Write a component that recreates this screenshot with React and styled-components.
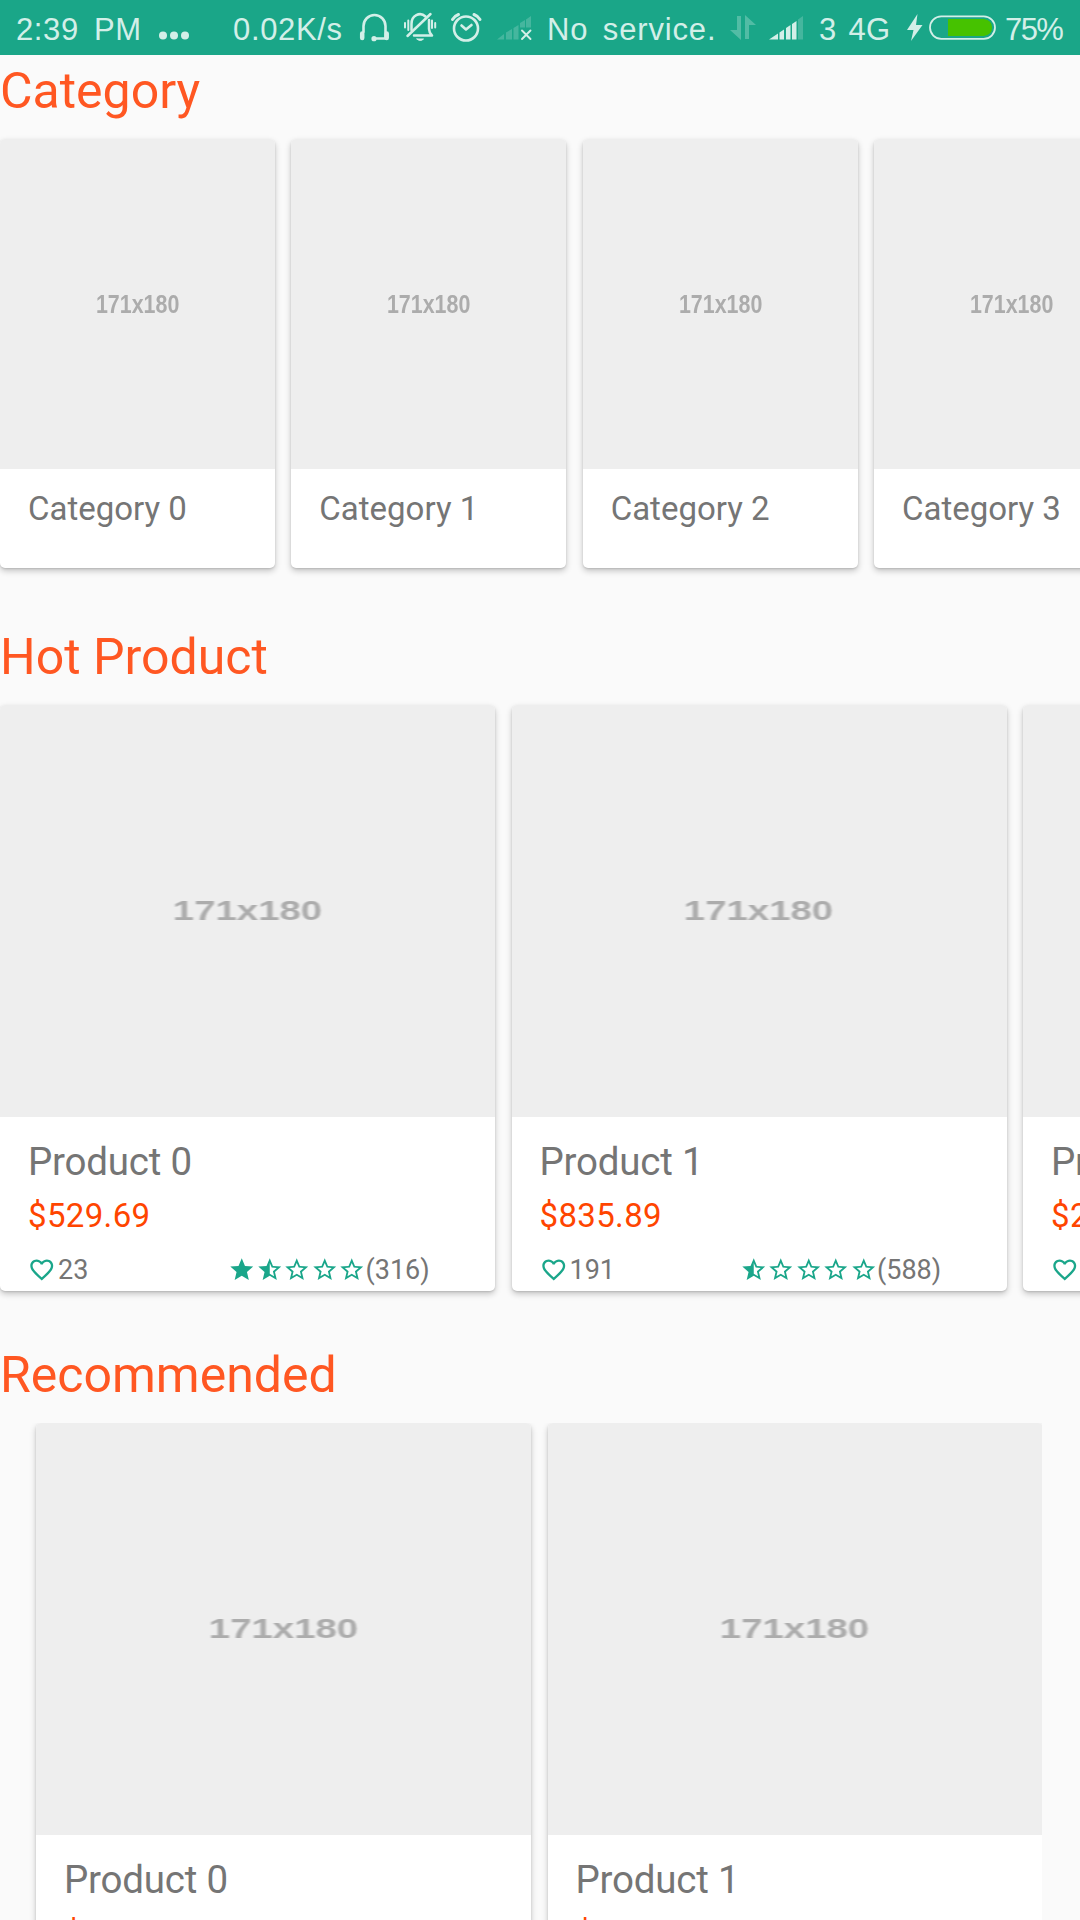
import React from 'react';
import styled, { createGlobalStyle } from 'styled-components';

const Global = createGlobalStyle`
  html, body { margin: 0; padding: 0; }
  body { background: #fafafa; font-family: Roboto, sans-serif; }
`;

const Screen = styled.div`
  width: 1080px;
  height: 1920px;
  overflow: hidden;
  background: #fafafa;
  display: flex;
  flex-direction: column;
`;

const StatusBar = styled.header`
  flex: none;
  height: 55px;
  box-sizing: border-box;
  padding: 0 16px;
  background: #1aa688;
  color: #d3efe8;
  display: flex;
  align-items: center;
  font: 31px/55px 'Liberation Sans', sans-serif;
  white-space: pre;
`;

const StatusText = styled.span`
  flex: none;
  box-sizing: border-box;
  width: ${(p) => p.$w}px;
  height: 55px;
  padding-top: 2px;
  letter-spacing: ${(p) => p.$ls || 0}px;
  word-spacing: ${(p) => p.$ws || 0}px;
`;

const StatusIcon = styled.svg`
  flex: none;
  display: block;
  width: ${(p) => p.$w}px;
  height: 55px;
`;

const Section = styled.section`
  flex: none;
  height: ${(p) => p.$h}px;
`;

const Title = styled.h2`
  margin: 0;
  height: ${(p) => p.$h}px;
  box-sizing: border-box;
  padding-top: ${(p) => p.$top}px;
  font-weight: 400;
  font-size: 50px;
  line-height: 60px;
  color: #ff5722;
`;

const Row = styled.div`
  display: flex;
  gap: ${(p) => p.$gap || 16.5}px;
`;

const ClippedRow = styled(Row)`
  width: 1042px;
  box-sizing: border-box;
  padding-left: 36px;
  overflow: hidden;
`;

const Card = styled.article`
  flex: none;
  width: ${(p) => p.$w}px;
  height: ${(p) => p.$h}px;
  border-radius: 5px;
  background: #fff;
  box-shadow: 0 3px 6px rgba(0, 0, 0, 0.22), 0 1px 2px rgba(0, 0, 0, 0.12);
`;

const Placeholder = styled.div`
  height: ${(p) => p.$h}px;
  border-radius: 5px 5px 0 0;
  background: #eeeeee;
  color: #acacac;
  display: flex;
  align-items: center;
  justify-content: center;
  font: 700 ${(p) => p.$size}px/30px 'Liberation Sans', sans-serif;
`;

const Dimensions = styled.span`
  transform: scaleX(${(p) => p.$stretch});
  filter: blur(0.7px);
`;

const Caption = styled.div`
  padding: 20px 28px 0;
  font-size: 33px;
  line-height: 40px;
  color: #757575;
`;

const Info = styled.div`
  padding: 22px 28px 0;
  color: #757575;
`;

const Name = styled.div`
  font-size: 38.5px;
  letter-spacing: -0.2px;
  line-height: 46px;
`;

const Price = styled.div`
  margin-top: 11px;
  font-size: 33px;
  letter-spacing: 0.35px;
  line-height: 39px;
  color: #ff4500;
`;

const Meta = styled.div`
  display: flex;
  align-items: center;
  margin-top: 17px;
  height: 36px;
  font-size: 27px;
  line-height: 32px;
`;

const Likes = styled.div`
  width: 200px;
  display: flex;
  align-items: center;
`;

const Glyph = styled.svg`
  flex: none;
  display: block;
  width: 27.5px;
  height: 27.5px;
  margin-right: ${(p) => p.$gap || 0}px;
  margin-top: -1px;
  fill: #1aa68a;
`;

const Stars = styled.div`
  display: flex;
  align-items: center;
`;

const HEART = 'M16.5 3c-1.74 0-3.41.81-4.5 2.09C10.91 3.81 9.24 3 7.5 3 4.42 3 2 5.42 2 8.5c0 3.78 3.4 6.86 8.55 11.54L12 21.35l1.45-1.32C18.6 15.36 22 12.28 22 8.5 22 5.42 19.58 3 16.5 3zm-4.4 15.55l-.1.1-.1-.1C7.14 14.24 4 11.39 4 8.5 4 6.5 5.5 5 7.5 5c1.54 0 3.04.99 3.57 2.36h1.87C13.46 5.99 14.96 5 16.5 5c2 0 3.5 1.5 3.5 3.5 0 2.89-3.14 5.74-7.9 10.05z';
const STAR = {
  full: 'M12 17.27L18.18 21l-1.64-7.03L22 9.24l-7.19-.61L12 2 9.19 8.63 2 9.24l5.46 4.73L5.82 21z',
  half: 'M22 9.24l-7.19-.62L12 2 9.19 8.63 2 9.24l5.46 4.73L5.82 21 12 17.27 18.18 21l-1.63-7.03L22 9.24zM12 15.4V6.1l1.71 4.04 4.38.38-3.32 2.88 1 4.28L12 15.4z',
  empty: 'M22 9.24l-7.19-.62L12 2 9.19 8.63 2 9.24l5.46 4.73L5.82 21 12 17.27 18.18 21l-1.63-7.03L22 9.24zM12 15.4l-3.76 2.27 1-4.28-3.32-2.88 4.38-.38L12 6.1l1.71 4.04 4.38.38-3.32 2.88 1 4.28L12 15.4z',
};

const products = [
  { name: 'Product 0', price: '$529.69', likes: 23, rating: 1.5, reviews: 316 },
  { name: 'Product 1', price: '$835.89', likes: 191, rating: 0.5, reviews: 588 },
  { name: 'Product 2', price: '$274.35', likes: 87, rating: 2.5, reviews: 402 },
];

function Rating({ value, reviews }) {
  return (
    <Stars>
      {[0, 1, 2, 3, 4].map((i) => (
        <Glyph key={i} viewBox="0 0 24 24">
          <path d={value - i >= 1 ? STAR.full : value - i > 0 ? STAR.half : STAR.empty} />
        </Glyph>
      ))}
      <span>({reviews})</span>
    </Stars>
  );
}

function ProductCard({ product }) {
  return (
    <Card $w={495} $h={586}>
      <Placeholder $h={412} $size={28}><Dimensions $stretch={1.37}>171x180</Dimensions></Placeholder>
      <Info>
        <Name>{product.name}</Name>
        <Price>{product.price}</Price>
        <Meta>
          <Likes>
            <Glyph viewBox="0 0 24 24" $gap={2.5}><path d={HEART} /></Glyph>
            {product.likes}
          </Likes>
          <Rating value={product.rating} reviews={product.reviews} />
        </Meta>
      </Info>
    </Card>
  );
}

function Status() {
  const ink = '#d3efe8';
  return (
    <StatusBar>
      <StatusText $w={143} $ls={0.6} $ws={6}>2:39 PM</StatusText>
      <StatusIcon $w={74} viewBox="159 0 74 55" fill={ink}>
        <circle cx="163" cy="35.5" r="4" /><circle cx="174" cy="35.5" r="4" /><circle cx="185" cy="35.5" r="4" />
      </StatusIcon>
      <StatusText $w={122} $ls={0.65}>0.02K/s</StatusText>
      <StatusIcon $w={192} viewBox="355 0 192 55" fill="none" stroke={ink} strokeLinecap="round" strokeLinejoin="round">
        <g strokeWidth="2.6">
          <path d="M363.500 32 V26 a11 11 0 0 1 22 0 V38.500 H373.500" />
          <path d="M362.200 33.500 V38 M386.700 33.500 V38" strokeWidth="4.500" />
          <circle cx="374" cy="38.700" r="1.600" fill={ink} strokeWidth="2" />
        </g>
        <g strokeWidth="2.500">
          <path d="M411.500 30 V24 a8.500 9.500 0 0 1 14-7.500" />
          <path d="M429 20 V29 q0 3 3 6.500 H414" />
          <path d="M407.500 36 L430.500 14" />
          <path d="M408.300 20.500 V30 M405 23 V27.500 M432 20.500 V28 M435.200 23 V27.500" strokeWidth="2" />
          <path d="M417 39 h6.500 q-3.200 3 -6.500 0z" fill={ink} strokeWidth="1" />
        </g>
        <g strokeWidth="2.600">
          <circle cx="466" cy="28.500" r="12" />
          <path d="M461.500 25.500 L466 29.500 L471.500 25" />
          <path d="M452.500 19.500 q2-3.500 6-5 M474 14.500 q4 1.500 6 5" strokeWidth="3" />
        </g>
        <g fill={ink} fillOpacity="0.230" stroke="none">
          <path d="M497 39.500 l7-5.500 v5.500z M506 32.500 l6-3.500 v10.500 h-6z M513.500 28 l5-3 v14.500 h-5z M520 23 l5-3 v7.500 h-5z M526 19.500 l5-3.500 v11.500 h-5z" />
        </g>
        <path d="M522 30.500 L530.500 39 M530.500 30.500 L522 39" strokeWidth="1.900" />
      </StatusIcon>
      <StatusText $w={177} $ls={0.85} $ws={5}>No service.</StatusText>
      <StatusIcon $w={95} viewBox="724 0 95 55" fill={ink}>
        <g fillOpacity="0.300">
          <path d="M737 16 h4 v24 L730 30 h7z" />
          <path d="M745 39 V15 L756 25 h-7 v14z" />
        </g>
        <path d="M769 39.500 l9-6 v6z M779.500 32.500 l4.500-3 v10 h-4.500z M786 28 l4.500-3 v14.500 h-4.500z M792 24 l4.500-3 v18.500 h-4.500z" />
        <path d="M798 19.500 l5-3.500 v23.500 h-5z" fillOpacity="0.230" />
      </StatusIcon>
      <StatusText $w={88} $ls={0.3} $ws={3}>3 4G</StatusText>
      <StatusIcon $w={98} viewBox="907 0 98 55">
        <path d="M917.500 14 L907 30 h6.500 L911 41 L922.500 25 h-6.500z" fill={ink} />
        <rect x="930" y="16.300" width="65" height="22.500" rx="11.200" fill="none" stroke={ink} strokeWidth="1.800" />
        <path d="M948 19 H984 q8 1 8 8.500 t-8 8.500 H948z" fill="#46c200" />
      </StatusIcon>
      <StatusText $w={60} $ls={-1.6}>75%</StatusText>
    </StatusBar>
  );
}

export default function App() {
  return (
    <>
      <Global />
      <Screen>
        <Status />
        <Section $h={566 - 55}>
          <Title $h={84} $top={6}>Category</Title>
          <Row $gap={16.33}>
            {[0, 1, 2, 3].map((n) => (
              <Card key={n} $w={275} $h={429}>
                <Placeholder $h={330} $size={25.5}><Dimensions $stretch={0.84}>171x180</Dimensions></Placeholder>
                <Caption>Category {n}</Caption>
              </Card>
            ))}
          </Row>
        </Section>
        <Section $h={725}>
          <Title $h={139} $top={61}>Hot Product</Title>
          <Row>{products.map((p) => <ProductCard key={p.name} product={p} />)}</Row>
        </Section>
        <Section $h={629}>
          <Title $h={132} $top={54}>Recommended</Title>
          <ClippedRow>{products.slice(0, 2).map((p) => <ProductCard key={p.name} product={p} />)}</ClippedRow>
        </Section>
      </Screen>
    </>
  );
}
